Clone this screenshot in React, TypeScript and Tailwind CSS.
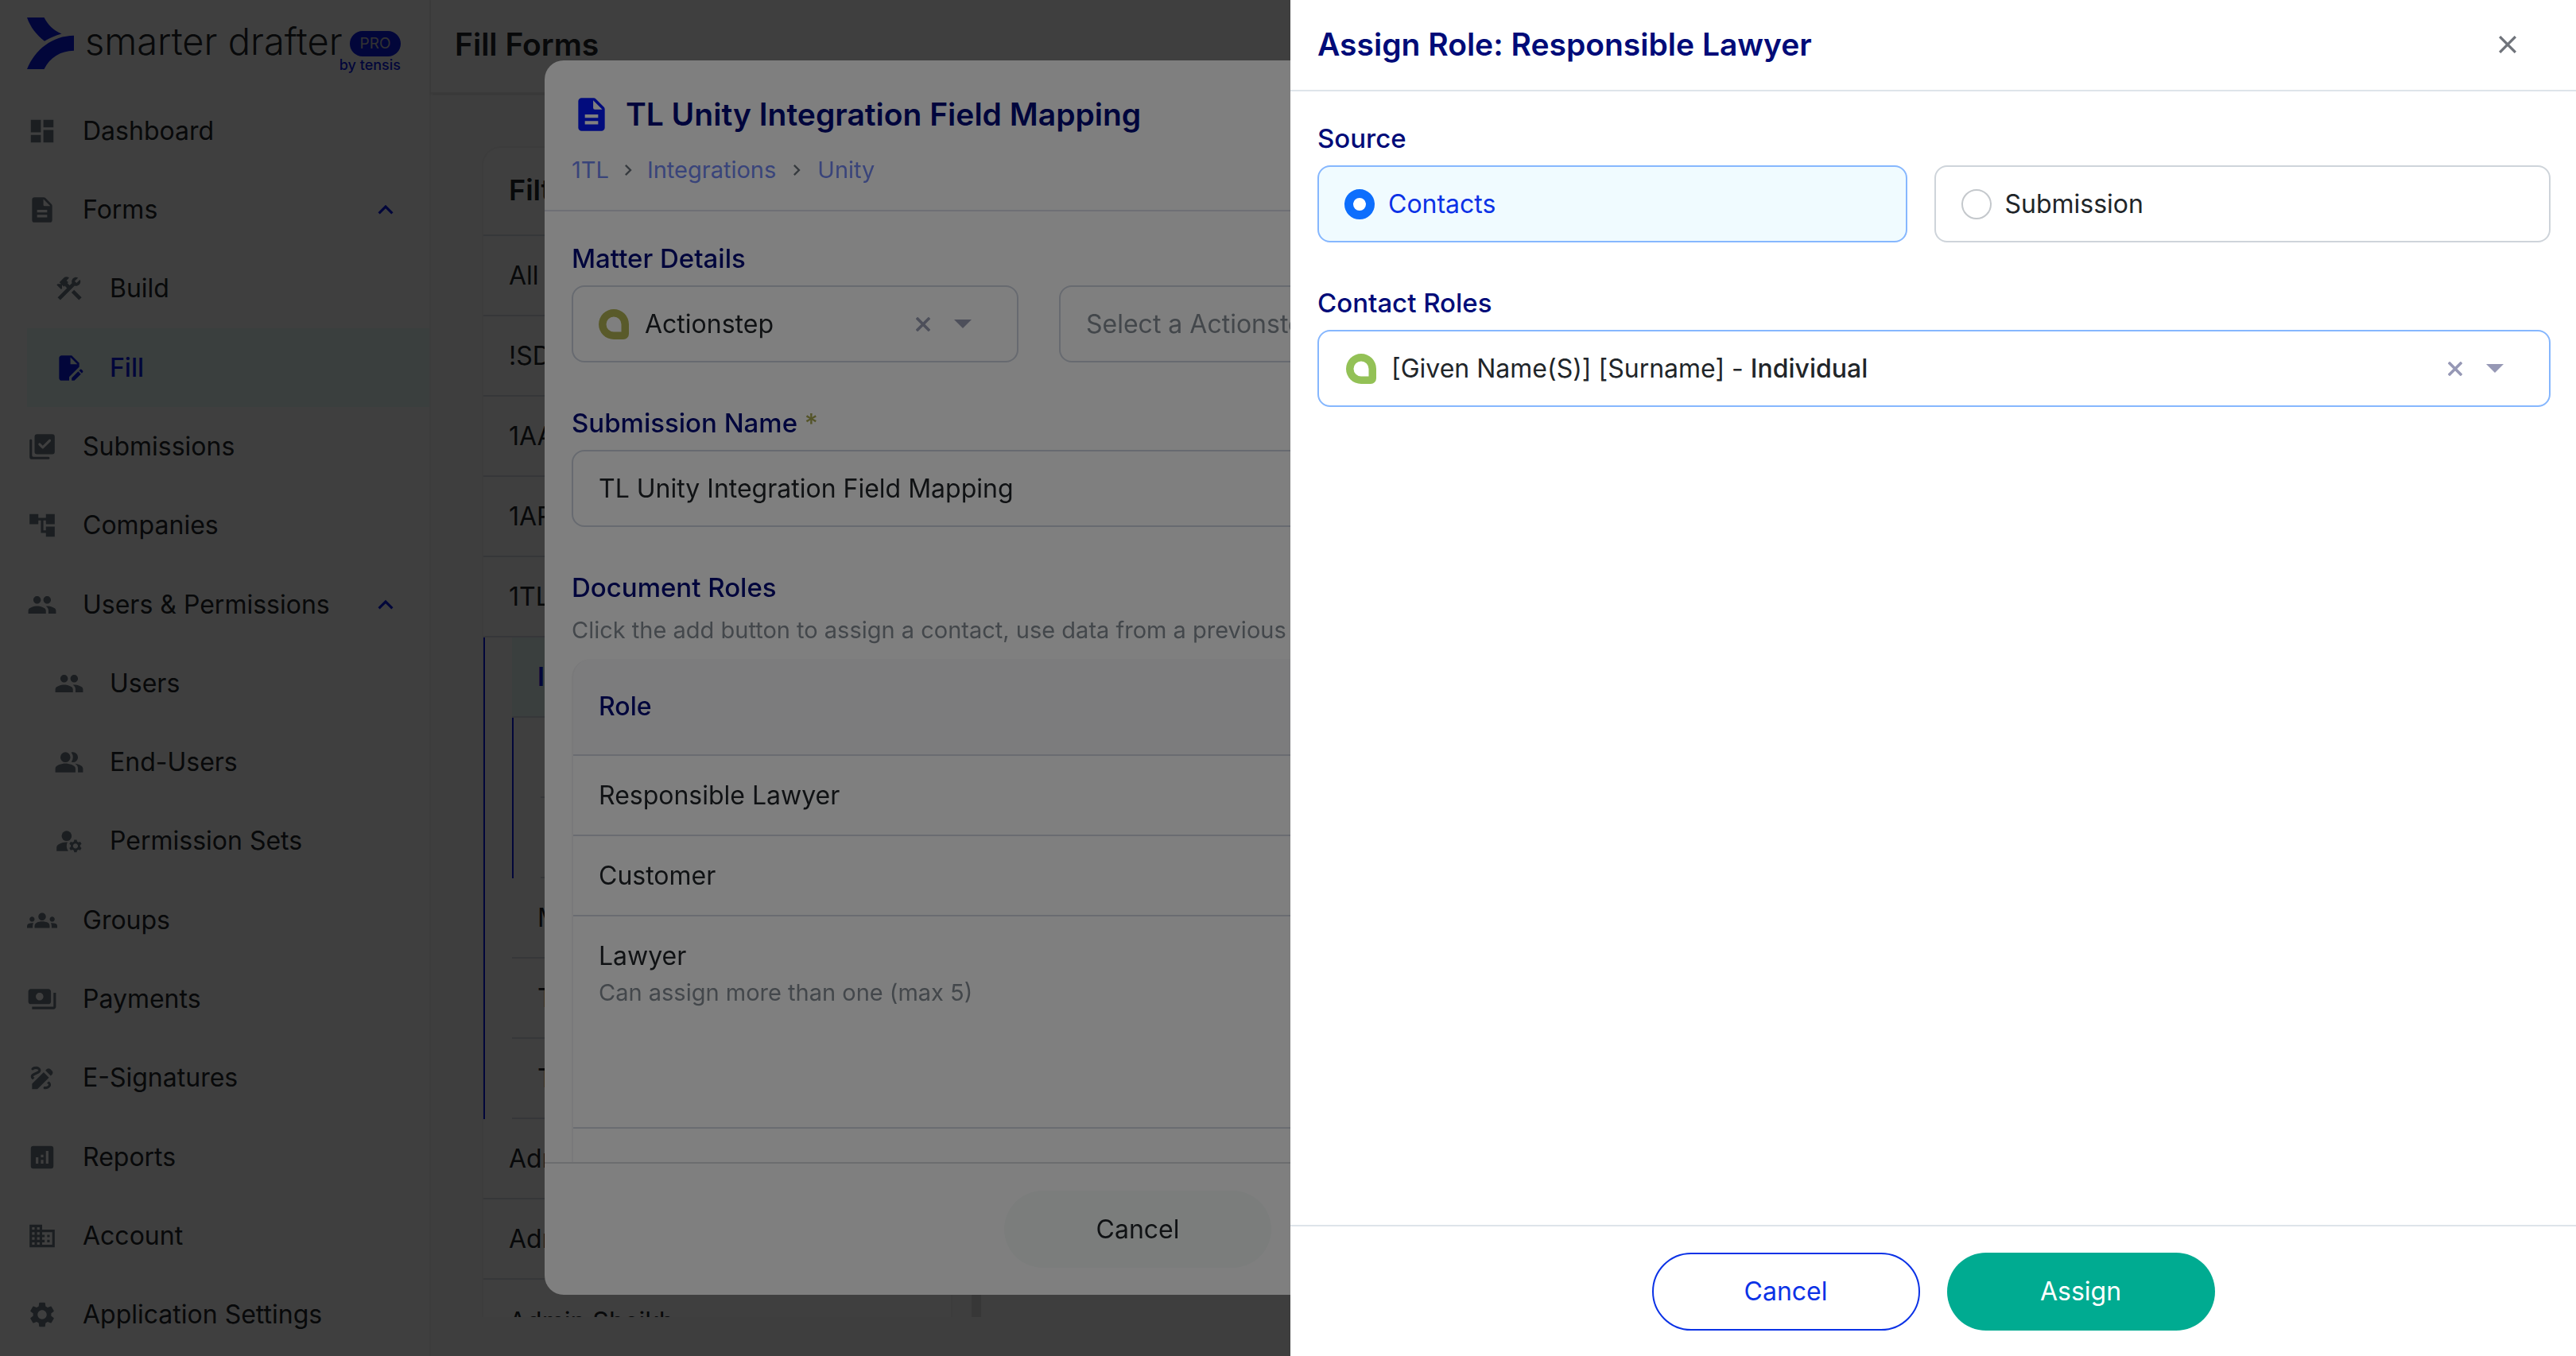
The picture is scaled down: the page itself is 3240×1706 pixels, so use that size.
import React from "react";
import {
  MdDashboard, MdEditDocument, MdAccountTree, MdPeople, MdManageAccounts, MdGroups,
  MdPayments, MdDraw, MdDomain, MdSettings, MdConstruction, MdKeyboardArrowUp, MdKeyboardArrowDown, MdKeyboardArrowRight,
} from "react-icons/md";

type IconProps = { className?: string };

function DocIcon({ className }: IconProps) {
  return (
    <svg viewBox="0 0 24 24" fill="currentColor" className={className} aria-hidden="true">
      <path d="M14.6 2.6A2 2 0 0 0 13.2 2H6a2 2 0 0 0-2 2v16a2 2 0 0 0 2 2h12a2 2 0 0 0 2-2V8.800a2 2 0 0 0-.6-1.400zM16 18H8v-2h8zm0-4H8v-2h8zm-3-6V3.500L18.500 9H14a1 1 0 0 1-1-1" />
    </svg>
  );
}

function SubmissionsIcon({ className }: IconProps) {
  return (
    <svg viewBox="0 0 24 24" fill="currentColor" className={className} aria-hidden="true">
      <path d="M20 2H8a2 2 0 0 0-2 2v12a2 2 0 0 0 2 2h12a2 2 0 0 0 2-2V4a2 2 0 0 0-2-2m-8.200 11.300L9.200 10.700a1 1 0 0 1 1.400-1.400l1.900 1.900 4.900-4.900a1 1 0 0 1 1.400 1.400l-5.600 5.600a1 1 0 0 1-1.400 0M3 6a1 1 0 0 0-1 1v13a2 2 0 0 0 2 2h13a1 1 0 0 0 0-2H5a1 1 0 0 1-1-1V7a1 1 0 0 0-1-1" />
    </svg>
  );
}

function EndUsersIcon({ className }: IconProps) {
  return (
    <svg viewBox="0 0 24 24" fill="currentColor" className={className} aria-hidden="true">
      <path d="M16.670 13.130C18.040 14.060 19 15.320 19 17v3h4v-3c0-2.180-3.570-3.470-6.330-3.870M15 12a4 4 0 0 0 0-8c-.470 0-.910.100-1.330.240a5.980 5.980 0 0 1 0 7.520c.420.140.860.240 1.330.240M9 12a4 4 0 1 0 0-8 4 4 0 0 0 0 8m0 1c-2.670 0-8 1.340-8 4v3h16v-3c0-2.660-5.330-4-8-4" />
    </svg>
  );
}

function ReportsIcon({ className }: IconProps) {
  return (
    <svg viewBox="0 0 24 24" fill="currentColor" className={className} aria-hidden="true">
      <path d="M19 3H5a2 2 0 0 0-2 2v14a2 2 0 0 0 2 2h14a2 2 0 0 0 2-2V5a2 2 0 0 0-2-2M9 17H7v-5h2zm4 0h-2v-3h2zm0-5h-2v-2h2zm4 5h-2V7h2z" />
    </svg>
  );
}

function ActionstepIcon({ className }: IconProps) {
  return (
    <svg viewBox="0 0 38 38" fill="currentColor" className={className} aria-hidden="true">
      <path fillRule="evenodd" d="M19 0a19 19 0 0 1 19 19v12a7 7 0 0 1-7 7H19a19 19 0 0 1 0-38m0 9.500a9.500 9.500 0 0 0 0 19h9.500V19a9.500 9.500 0 0 0-9.500-9.500" />
    </svg>
  );
}

function Caret({ className }: IconProps) {
  return (
    <svg viewBox="0 0 22 11" fill="currentColor" className={className} aria-hidden="true">
      <path d="M0 0h22L11 11z" />
    </svg>
  );
}

function Cross({ className, weight = 3 }: IconProps & { weight?: number }) {
  return (
    <svg viewBox="0 0 20 20" stroke="currentColor" strokeWidth={weight} className={className} aria-hidden="true">
      <path d="M1 1l18 18M19 1L1 19" />
    </svg>
  );
}

type NavItem = { label: string; icon: React.ComponentType<IconProps>; child?: boolean; open?: boolean; active?: boolean };

const nav: NavItem[] = [
  { label: "Dashboard", icon: MdDashboard },
  { label: "Forms", icon: DocIcon, open: true },
  { label: "Build", icon: MdConstruction, child: true },
  { label: "Fill", icon: MdEditDocument, child: true, active: true },
  { label: "Submissions", icon: SubmissionsIcon },
  { label: "Companies", icon: MdAccountTree },
  { label: "Users & Permissions", icon: MdPeople, open: true },
  { label: "Users", icon: MdPeople, child: true },
  { label: "End-Users", icon: EndUsersIcon, child: true },
  { label: "Permission Sets", icon: MdManageAccounts, child: true },
  { label: "Groups", icon: MdGroups },
  { label: "Payments", icon: MdPayments },
  { label: "E-Signatures", icon: MdDraw },
  { label: "Reports", icon: ReportsIcon },
  { label: "Account", icon: MdDomain },
  { label: "Application Settings", icon: MdSettings },
];

function Logo() {
  return (
    <div className="flex h-[115px] shrink-0 pt-[22px] text-[#0818e8]">
      <svg viewBox="0 0 60 65" fill="currentColor" className="h-[65px] w-[60px] shrink-0" aria-hidden="true">
        <path d="M0 0h21.500C26 9 33 16 43.500 20.500 36 22.500 28 26 22 29.700 12 22 4 12 0 0M59 22.700v19C42 42 29 50 21.500 65H0C10 40 32 23 59 22.700" />
      </svg>
      <div className="ml-[13px] flex flex-col pt-1">
        <div className="flex items-center gap-2">
          <span className="w-[325px] text-[47px] leading-[52px] font-light whitespace-nowrap text-[#212529]">smarter drafter</span>
          <span className="mt-[5px] flex h-8 w-16 items-center justify-center rounded-full bg-[#0818e8] text-[19px] text-[#c8c8c8]">PRO</span>
        </div>
        <span className="-mt-2 self-end text-[18px] leading-6 font-medium">by tensis</span>
      </div>
    </div>
  );
}

function Sidebar() {
  return (
    <aside className="flex w-[542px] shrink-0 flex-col border-r-2 border-[#f0f0f0] bg-white pl-[34px]">
      <Logo />
      <nav className="grid flex-1 auto-rows-fr pb-0.5">
        {nav.map(({ label, icon: Icon, child, open, active }) => (
          <a
            key={label}
            href="#"
            className={`flex items-center ${child ? "pl-[34px]" : ""} ${active ? "bg-[#e8fcfa] font-medium text-[#0818e8]" : "text-[#212529]"}`}
          >
            <Icon className={`size-[38px] shrink-0 ${active ? "" : "text-[#6c7a85]"}`} />
            <span className="ml-8 flex-1">{label}</span>
            {open && <MdKeyboardArrowUp className="mr-9 size-[38px] text-[#0818e8]" />}
          </a>
        ))}
      </nav>
    </aside>
  );
}

function ListRow({ children, className = "" }: { children?: React.ReactNode; className?: string }) {
  return <li className={`flex h-[101px] shrink-0 items-center border-b-2 border-[#dadfe5] ${className}`}>{children}</li>;
}

function FormsPage() {
  return (
    <main className="flex min-w-0 flex-1 flex-col bg-[#fbfbfb]">
      <header className="flex h-[118px] shrink-0 items-center border-b-2 border-[#e9e9e9] bg-white pb-1 pl-[30px] shadow-sm">
        <h1 className="text-[39px] font-semibold text-[#212529]">Fill Forms</h1>
      </header>
      <div className="mt-[66px] mb-[49px] ml-16 flex min-h-0 flex-1 gap-6 overflow-hidden">
        <section className="flex w-[592px] flex-col overflow-hidden rounded-t-3xl border-2 border-b-0 border-[#f0f0f0] bg-white">
          <h2 className="flex h-[111px] shrink-0 items-center border-b-2 border-[#dadfe5] pb-1 pl-8 text-[36px] font-semibold">Filter</h2>
          <ul>
            {["All", "!SD Forms", "1AA Forms", "1AR Forms", "1TL"].map((t) => (
              <ListRow key={t} className="pl-8">{t}</ListRow>
            ))}
            <li className="border-l-2 border-[#0818e8] pl-[34px]">
              <ul>
                <ListRow className="bg-[#e8fcfa] pl-8 font-semibold text-[#0818e8]">Integrations</ListRow>
                <li className="border-l-2 border-[#0818e8] pl-[34px]">
                  <ul>
                    <ListRow className="pl-8">Actionstep</ListRow>
                    <ListRow className="pl-8">Unity</ListRow>
                  </ul>
                </li>
                <ListRow className="pl-8">Matters</ListRow>
                <ListRow className="pl-8">Templates</ListRow>
                <ListRow className="pl-8">Testing</ListRow>
              </ul>
            </li>
            <ListRow className="pl-8">Admin</ListRow>
            <ListRow className="pl-8">Admin Forms</ListRow>
            <ListRow className="justify-between pt-1.5 pr-9 pl-8">
              Admin Sheikh
              <MdKeyboardArrowDown className="size-[38px] text-[#0818e8]" />
            </ListRow>
          </ul>
        </section>
        <div className="w-3 bg-[#dcdcdc]" />
      </div>
    </main>
  );
}

const fieldBox = "flex h-[97px] items-center rounded-2xl border-2 pl-8 pr-[34px]";
const fieldLabel = "text-[33px] leading-12 font-medium text-[#000b78]";

function MappingDialog() {
  return (
    <div role="dialog" aria-label="TL Unity Integration Field Mapping" className="flex flex-1 flex-col overflow-hidden rounded-3xl bg-white">
      <header className="flex h-[190px] shrink-0 flex-col border-b-2 border-[#dcdfea] px-[34px] pt-10">
        <div className="flex items-center gap-[18px]">
          <DocIcon className="size-[50px] text-[#0418fa]" />
          <h2 className="text-[39px] leading-[56px] font-semibold text-[#000b78]">TL Unity Integration Field Mapping</h2>
        </div>
        <nav className="mt-[22px] flex items-center text-[29px] leading-10 text-[#7288f5]">
          <a href="#">1TL</a>
          <MdKeyboardArrowRight className="mx-2.5 size-7 text-[#6c757d]" />
          <a href="#">Integrations</a>
          <MdKeyboardArrowRight className="mx-3 size-7 text-[#6c757d]" />
          <a href="#">Unity</a>
        </nav>
      </header>
      <div className="flex min-h-0 flex-1 flex-col overflow-hidden px-[34px] pt-[35px]">
        <label htmlFor="matter" className={fieldLabel}>Matter Details</label>
        <div className="mt-2.5 flex gap-[51px]">
          <div className={`w-[562px] gap-5 border-[#cfd5e0] ${fieldBox}`}>
            <ActionstepIcon className="size-[38px] shrink-0 text-[#b2b455]" />
            <select id="matter" className="min-w-0 flex-1 appearance-none bg-transparent outline-none">
              <option>Actionstep</option>
            </select>
            <button type="button" aria-label="Clear" className="text-[#9a9fb5]"><Cross weight={4} className="size-[18px]" /></button>
            <Caret className="mr-[23px] ml-2.5 h-[11px] w-[22px] text-[#9a9fb5]" />
          </div>
          <div className={`flex-1 border-[#cfd5e0] ${fieldBox}`}>
            <select aria-label="Actionstep matter" className="flex-1 appearance-none bg-transparent text-[#868e96] outline-none">
              <option>Select a Actionstep Matter</option>
            </select>
          </div>
        </div>
        <label htmlFor="subname" className={`mt-13 ${fieldLabel}`}>
          Submission Name <span className="text-[#a8a850]">*</span>
        </label>
        <input id="subname" defaultValue="TL Unity Integration Field Mapping" className={`mt-2.5 shrink-0 border-[#cfd5e0] outline-none ${fieldBox}`} />
        <h3 className={`mt-13 ${fieldLabel}`}>Document Roles</h3>
        <p className="mt-2.5 text-[29px] leading-10 whitespace-nowrap text-[#868e96]">
          Click the add button to assign a contact, use data from a previous submission or enter the details
        </p>
        <div className="mt-4 shrink-0 rounded-t-3xl border-x-2 border-[#f2f2f4] bg-[#f8f8fa]">
          <table className="w-full border-collapse text-left">
            <thead>
              <tr className="h-[121px] border-b-2 border-[#d5d9e2]">
                <th className="px-8 font-medium text-[#000b78]">Role</th>
              </tr>
            </thead>
            <tbody className="bg-white">
              <tr className="h-[101px] border-b-2 border-[#d5d9e2]"><td className="px-8">Responsible Lawyer</td></tr>
              <tr className="h-[101px] border-b-2 border-[#d5d9e2]"><td className="px-8">Customer</td></tr>
              <tr className="h-[267px] border-b-2 border-[#d5d9e2]">
                <td className="px-8 pt-[26px] align-top leading-12">
                  Lawyer
                  <div className="mt-0.5 text-[29px] leading-10 text-[#868e96]">Can assign more than one (max 5)</div>
                </td>
              </tr>
              <tr className="h-[101px]"><td /></tr>
            </tbody>
          </table>
        </div>
      </div>
      <footer className="flex h-[167px] shrink-0 items-center justify-center gap-[34px] border-t-2 border-[#d8dade]">
        <button type="button" className="h-[97px] w-[336px] rounded-full bg-[#f6faf9]">Cancel</button>
        <button type="button" className="h-[97px] w-[336px] rounded-full bg-[#00ab91] text-white">Continue</button>
      </footer>
    </div>
  );
}

function Radio({ id, text, checked }: { id: string; text: string; checked?: boolean }) {
  return (
    <label
      htmlFor={id}
      className={`gap-[17px] ${fieldBox} ${checked ? "border-[#86b7fe] bg-[#f0fbff] text-[#0b32e6]" : "border-[#ced4da]"}`}
    >
      <input
        id={id}
        type="radio"
        name="source"
        defaultChecked={checked}
        className="size-[38px] shrink-0 appearance-none rounded-full border-2 border-[#c4c8cc] bg-white checked:border-[11px] checked:border-[#0d6efd]"
      />
      {text}
    </label>
  );
}

function AssignDrawer() {
  return (
    <aside aria-label="Assign role" className="flex h-full w-[1617px] max-w-full flex-col bg-white">
      <header className="flex h-[115px] shrink-0 items-center justify-between border-b-2 border-[#dee4ea] pr-[75px] pb-0.5 pl-[34px]">
        <h2 className="text-[39px] font-semibold text-[#000b78]">Assign Role: Responsible Lawyer</h2>
        <button type="button" aria-label="Close" className="text-[#6f737a]"><Cross className="size-[22px]" /></button>
      </header>
      <div className="flex flex-1 flex-col px-[34px] pr-8 pt-[35px]">
        <fieldset>
          <legend className={fieldLabel}>Source</legend>
          <div className="mt-2.5 grid grid-cols-2">
            <div className="pr-[34px]"><Radio id="contacts" text="Contacts" checked /></div>
            <Radio id="submission" text="Submission" />
          </div>
        </fieldset>
        <label htmlFor="role" className={`mt-13 ${fieldLabel}`}>Contact Roles</label>
        <div className={`relative mt-2.5 border-[#86b7fe] ${fieldBox}`}>
          <ActionstepIcon className="ml-0.5 size-[38px] shrink-0 text-[#93c156]" />
          <span className="ml-[19px] flex-1">[Given Name(S)] [Surname] - <span className="font-medium">Individual</span></span>
          <select id="role" className="absolute inset-0 size-full appearance-none opacity-0">
            <option>[Given Name(S)] [Surname] - Individual</option>
          </select>
          <button type="button" aria-label="Clear" className="relative text-[#9698b5]"><Cross weight={4} className="size-[18px]" /></button>
          <Caret className="mr-[23px] ml-[30px] h-[11px] w-[22px] text-[#9698b5]" />
        </div>
      </div>
      <footer className="flex h-[165px] shrink-0 items-center justify-center gap-[34px] border-t-2 border-[#dee4ea]">
        <button type="button" className="h-[98px] w-[337px] rounded-full border-2 border-[#0b32e6] text-[#0b32e6]">Cancel</button>
        <button type="button" className="h-[98px] w-[337px] rounded-full bg-[#00ab91] text-white">Assign</button>
      </footer>
    </aside>
  );
}

export default function App() {
  return (
    <div className="relative flex h-screen overflow-hidden font-['Inter',sans-serif] text-[32px] leading-12 text-[#212529]">
      <Sidebar />
      <FormsPage />
      <div className="fixed inset-0 flex bg-black/50 pt-[76px] pr-[693px] pb-[77px] pl-[685px]">
        <MappingDialog />
      </div>
      <div className="fixed inset-0 flex justify-end bg-black/50">
        <AssignDrawer />
      </div>
    </div>
  );
}
